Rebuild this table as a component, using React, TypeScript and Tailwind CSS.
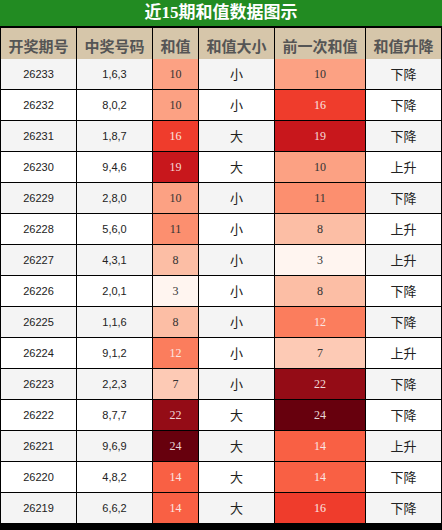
import React from "react";

type Row = [string, string, number, string, number, string];

const rows: Row[] = [
  ["26233", "1,6,3", 10, "小", 10, "下降"],
  ["26232", "8,0,2", 10, "小", 16, "下降"],
  ["26231", "1,8,7", 16, "大", 19, "下降"],
  ["26230", "9,4,6", 19, "大", 10, "上升"],
  ["26229", "2,8,0", 10, "小", 11, "下降"],
  ["26228", "5,6,0", 11, "小", 8, "上升"],
  ["26227", "4,3,1", 8, "小", 3, "上升"],
  ["26226", "2,0,1", 3, "小", 8, "下降"],
  ["26225", "1,1,6", 8, "小", 12, "下降"],
  ["26224", "9,1,2", 12, "小", 7, "上升"],
  ["26223", "2,2,3", 7, "小", 22, "下降"],
  ["26222", "8,7,7", 22, "大", 24, "下降"],
  ["26221", "9,6,9", 24, "大", 14, "上升"],
  ["26220", "4,8,2", 14, "大", 14, "下降"],
  ["26219", "6,6,2", 14, "大", 16, "下降"],
];

const heat: Record<number, string> = {
  3: "bg-[#fff5f0] text-[#333]",
  7: "bg-[#fdcab5] text-[#333]",
  8: "bg-[#fcbea5] text-[#333]",
  10: "bg-[#fca183] text-[#333]",
  11: "bg-[#fc8f6f] text-[#333]",
  12: "bg-[#fb7d5d] text-[#fbe6e2]",
  14: "bg-[#f96044] text-[#fbe6e2]",
  16: "bg-[#ef3c2c] text-[#fbe6e2]",
  19: "bg-[#c8171c] text-[#f6d9d9]",
  22: "bg-[#940c16] text-[#f0d8d8]",
  24: "bg-[#67000d] text-[#e8d6d6]",
};

const headers = ["开奖期号", "中奖号码", "和值", "和值大小", "前一次和值", "和值升降"];

const sansNum = "font-['Liberation_Sans',sans-serif] text-[11px]";
const serifNum = "font-['Liberation_Serif',serif] text-[12px]";
const cjk = "font-['Noto_Sans_CJK_SC',sans-serif] text-[13px]";

export default function App() {
  return (
    <div className="w-[442px] h-[530px] bg-black">
      <div className="h-[26px] bg-[#228b22] text-white font-bold text-[17px] leading-[26px] text-center font-['Liberation_Serif','Noto_Sans_CJK_SC',serif]">
        近15期和值数据图示
      </div>
      <div className="h-[2px]" />
      <div className="grid grid-cols-[75px_75px_45px_75px_90px_75px] auto-rows-[30px] gap-px px-px pb-px">
        {headers.map((h) => (
          <div
            key={h}
            className="h-[36px] bg-[#d6c6aa] text-[#555] font-bold text-[15px] flex items-center justify-center font-['Noto_Sans_CJK_SC',sans-serif]"
          >
            {h}
          </div>
        ))}
        {rows.map((r, i) => {
          const bg = i % 2 === 0 ? "bg-[#f4f4f4]" : "bg-white";
          const plain = `${bg} flex items-center justify-center text-[#222]`;
          return (
            <React.Fragment key={r[0]}>
              <div className={`${plain} ${sansNum}`}>{r[0]}</div>
              <div className={`${plain} ${sansNum}`}>{r[1]}</div>
              <div className={`${heat[r[2]]} flex items-center justify-center ${serifNum}`}>{r[2]}</div>
              <div className={`${plain} ${cjk}`}>{r[3]}</div>
              <div className={`${heat[r[4]]} flex items-center justify-center ${serifNum}`}>{r[4]}</div>
              <div className={`${plain} ${cjk}`}>{r[5]}</div>
            </React.Fragment>
          );
        })}
      </div>
    </div>
  );
}
